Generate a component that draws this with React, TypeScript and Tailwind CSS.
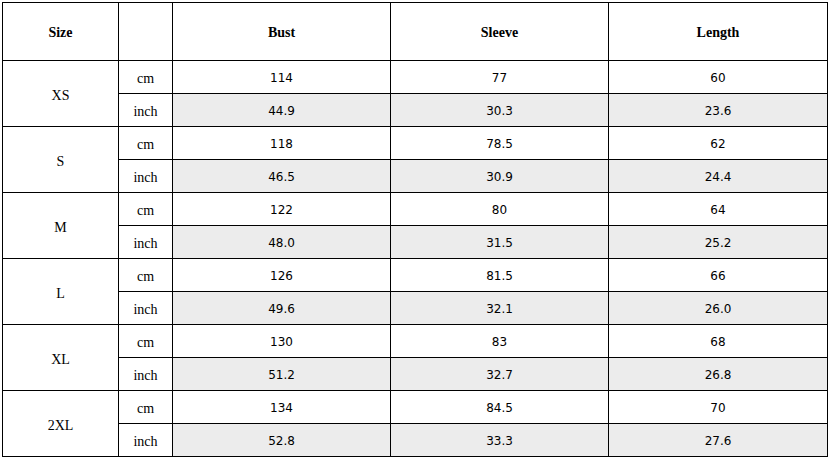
import { Fragment } from 'react'

const ROWS = [
  { size: 'XS', cm: ['114', '77', '60'], inch: ['44.9', '30.3', '23.6'] },
  { size: 'S', cm: ['118', '78.5', '62'], inch: ['46.5', '30.9', '24.4'] },
  { size: 'M', cm: ['122', '80', '64'], inch: ['48.0', '31.5', '25.2'] },
  { size: 'L', cm: ['126', '81.5', '66'], inch: ['49.6', '32.1', '26.0'] },
  { size: 'XL', cm: ['130', '83', '68'], inch: ['51.2', '32.7', '26.8'] },
  { size: '2XL', cm: ['134', '84.5', '70'], inch: ['52.8', '33.3', '27.6'] },
]

const serif = "font-['Liberation_Serif','Times_New_Roman',serif] text-[14px]"
const sans = "font-['DejaVu_Sans',Tahoma,sans-serif] text-[12px]"

export default function App() {
  return (
    <div className="w-[830px] h-[460px] bg-white pt-[2px] pl-[2px]">
      <table className="w-[825px] table-fixed border-collapse text-black">
        <colgroup>
          <col className="w-[116px]" />
          <col className="w-[54px]" />
          <col className="w-[218px]" />
          <col className="w-[218px]" />
          <col className="w-[219px]" />
        </colgroup>
        <thead>
          <tr className={`h-[58px] ${serif} font-bold`}>
            <th className="border border-black pt-[2px]">Size</th>
            <th className="border border-black"></th>
            <th className="border border-black pt-[2px]">Bust</th>
            <th className="border border-black pt-[2px]">Sleeve</th>
            <th className="border border-black pt-[2px]">Length</th>
          </tr>
        </thead>
        <tbody>
          {ROWS.map((r) => (
            <Fragment key={r.size}>
              <tr className="h-[33px]">
                <td rowSpan={2} className={`border border-black text-center pt-[3px] ${serif}`}>
                  {r.size}
                </td>
                <td className={`border border-black text-center pt-[2px] ${serif}`}>cm</td>
                {r.cm.map((v, i) => (
                  <td key={i} className={`border border-black text-center pt-[2px] ${sans}`}>
                    {v}
                  </td>
                ))}
              </tr>
              <tr className="h-[33px]">
                <td className={`border border-black text-center pt-[2px] ${serif}`}>inch</td>
                {r.inch.map((v, i) => (
                  <td key={i} className={`border border-black text-center pt-[2px] bg-[#ececec] ${sans}`}>
                    {v}
                  </td>
                ))}
              </tr>
            </Fragment>
          ))}
        </tbody>
      </table>
    </div>
  )
}
